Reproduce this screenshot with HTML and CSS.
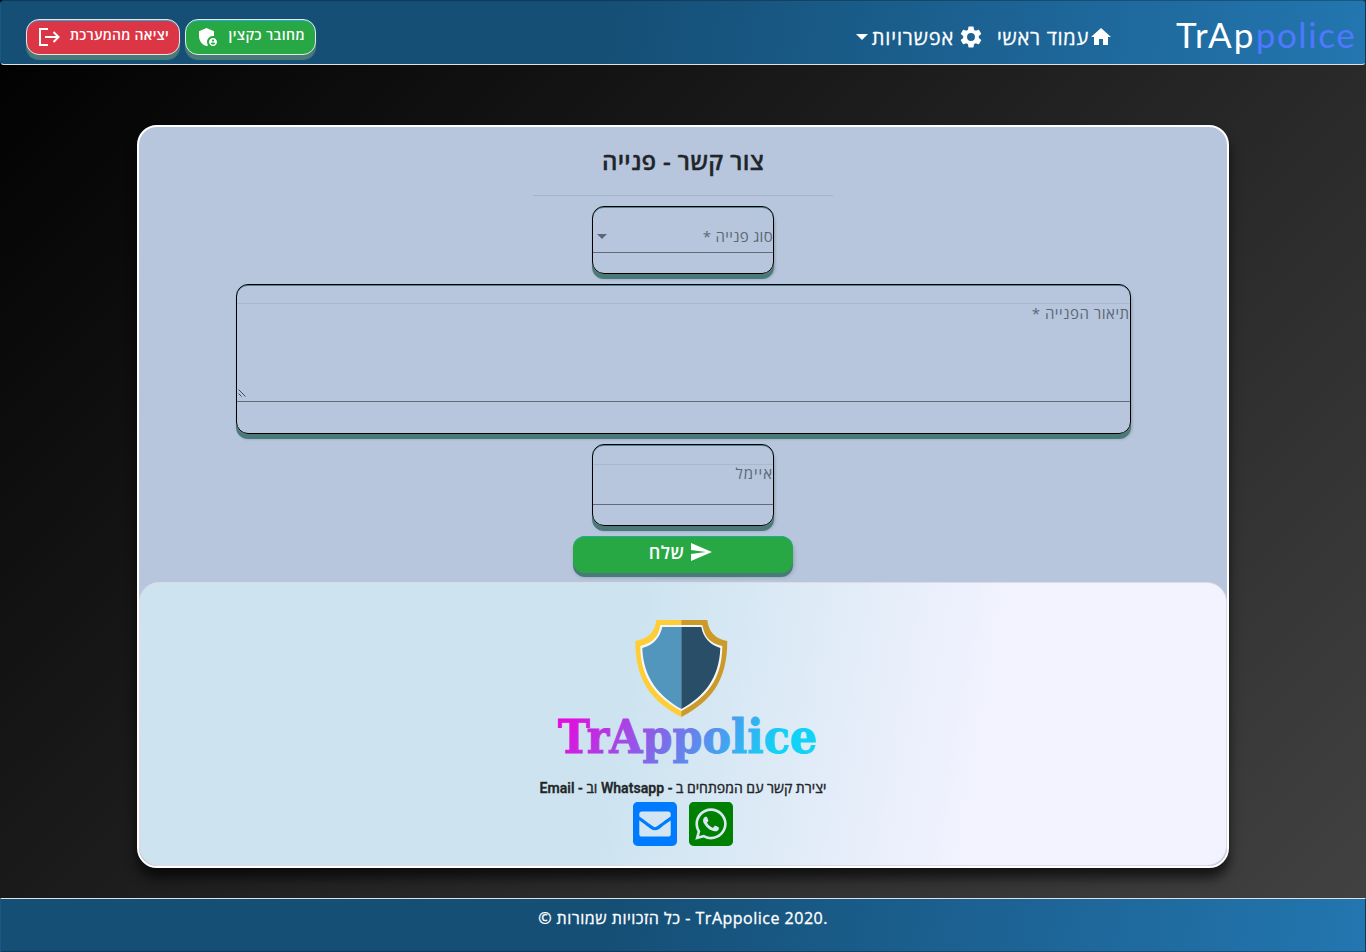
FILE: index.html
```html
<!DOCTYPE html>
<html lang="he" dir="rtl">
<head>
<meta charset="utf-8">
<title>TrAppolice</title>
<link rel="stylesheet" href="styles.css">
</head>
<body>
<header class="navbar">
  <a class="brand" dir="ltr">TrAp<span class="brand-accent">police</span></a>
  <nav class="menu">
    <a class="menu-item home"><svg class="icon" viewBox="0 0 24 24"><path d="M10 20V14H14V20H19V12H22L12 3 2 12H5V20H10Z"/></svg><span class="t-home">עמוד ראשי</span></a>
    <a class="menu-item options"><svg class="icon gear" viewBox="1 1 22 22"><path d="M19.14 12.94c.04-.3.06-.61.06-.94 0-.32-.02-.64-.07-.94l2.03-1.58c.18-.14.23-.41.12-.61l-1.92-3.32c-.12-.22-.37-.29-.59-.22l-2.39.96c-.5-.38-1.03-.7-1.62-.94l-.36-2.54c-.04-.24-.24-.41-.48-.41h-3.84c-.24 0-.43.17-.47.41l-.36 2.54c-.59.24-1.13.57-1.62.94l-2.39-.96c-.22-.08-.47 0-.59.22L2.74 8.87c-.12.21-.08.47.12.61l2.03 1.58c-.05.3-.09.63-.09.94s.02.64.07.94l-2.03 1.58c-.18.14-.23.41-.12.61l1.92 3.32c.12.22.37.29.59.22l2.39-.96c.5.38 1.03.7 1.62.94l.36 2.54c.05.24.24.41.48.41h3.84c.24 0 .44-.17.47-.41l.36-2.54c.59-.24 1.13-.56 1.62-.94l2.39.96c.22.08.47 0 .59-.22l1.92-3.32c.12-.22.07-.47-.12-.61l-2.01-1.58zM12 15.6A3.6 3.6 0 1 1 12 8.4a3.6 3.6 0 0 1 0 7.2z"/></svg><span class="t-options">אפשרויות</span><i class="caret"></i></a>
  </nav>
  <div class="session">
    <button class="pill officer"><span class="t-officer">מחובר כקצין</span><svg class="icon" viewBox="0 0 24 24"><path d="M17 11c.34 0 .67.04 1 .09V6.27L10.500 3 3 6.270v4.910c0 4.540 3.200 8.790 7.500 9.820.55-.13 1.080-.32 1.600-.55-.69-.98-1.100-2.170-1.100-3.450 0-3.310 2.690-6 6-6z"/><path d="M17 13c-2.210 0-4 1.790-4 4s1.790 4 4 4 4-1.790 4-4-1.790-4-4-4zm0 1.380c.62 0 1.120.51 1.120 1.120s-.51 1.120-1.120 1.120-1.120-.51-1.120-1.120.5-1.120 1.120-1.120zm0 5.370c-.93 0-1.740-.46-2.240-1.170.05-.72 1.510-1.080 2.240-1.080s2.190.36 2.240 1.080c-.5.71-1.310 1.170-2.240 1.170z"/></svg></button>
    <button class="pill logout"><span class="t-logout">יציאה מהמערכת</span><svg class="icon" viewBox="0 0 24 24"><path class="line" d="M11 4H3v16h8M8 12h13M16.500 7l5 5-5 5"/></svg></button>
  </div>
</header>

<main class="card">
  <form class="form">
    <h1 class="title"><span class="t-title">צור קשר - פנייה</span></h1>
    <hr class="rule">
    <div class="field select"><span class="label t-type">סוג פנייה *</span><i class="caret"></i></div>
    <div class="field area"><span class="label t-desc">תיאור הפנייה *</span>
      <svg class="grip" viewBox="0 0 9 9"><path d="M.5 1.500l7 7M.5 5.500l3 3"/></svg></div>
    <div class="field email"><span class="label t-email">איימל</span></div>
    <button class="send" type="button"><svg class="icon" viewBox="0 0 24 24"><path d="M2 21L23 12 2 3V10L17 12 2 14V21Z"/></svg><span class="t-send">שלח</span></button>
  </form>
  <section class="contact">
    <svg class="logo" viewBox="0 0 270 148">
      <defs>
        <linearGradient id="word" gradientUnits="userSpaceOnUse" x1="20" y1="60" x2="200" y2="165">
          <stop offset="0" stop-color="#f000dc"/><stop offset="1" stop-color="#12d2f5"/>
        </linearGradient>
      </defs>
      <g transform="translate(-.7 0)">
      <path fill="#ffcd36" d="M126 2H101Q99 20 80 23C80 65 98 84 126 99Z"/>
      <path fill="#cc9a29" d="M126 2H152Q154 20 172 23C172 65 154 84 126 99Z"/>
      <path fill="#f3f7fa" d="M126 7H105Q103 24 85 28C85 61 102 80 126 93 151 80 167 61 167 28 150 24 149 14 147 7Z"/>
      <path fill="#5296bd" d="M126 9H107Q103 26 87 30C88 61 105 79 126 91Z"/>
      <path fill="#294f68" d="M126 9H146Q149 25 165 30C164 61 148 79 126 91Z"/>
      </g>
      <text class="wordmark" direction="ltr" x="2" y="135" textLength="259" lengthAdjust="spacingAndGlyphs" fill="url(#word)" stroke="url(#word)">TrAppolice</text>
    </svg>
    <p class="caption"><span class="t-caption">יצירת קשר עם המפתחים ב - Whatsapp וב - Email</span></p>
    <div class="links">
      <svg class="link whatsapp" viewBox="0 32 448 448"><path d="M224 122.800c-72.700 0-131.800 59.100-131.900 131.800 0 24.900 7 49.200 20.200 70.100l3.100 5-13.300 48.600 49.900-13.100 4.800 2.900c20.200 12 43.400 18.400 67.100 18.400h.1c72.600 0 133.300-59.100 133.300-131.800 0-35.200-15.200-68.300-40.100-93.200-25-25-58-38.700-93.200-38.700zm77.500 188.400c-3.300 9.300-19.100 17.700-26.700 18.800-12.600 1.900-22.400.9-47.500-9.900-39.700-17.200-65.700-57.200-67.700-59.800-2-2.600-16.200-21.500-16.200-41s10.200-29.100 13.900-33.100c3.600-4 7.900-5 10.600-5 2.600 0 5.300 0 7.600.1 2.400.1 5.700-.9 8.900 6.800 3.300 7.900 11.200 27.400 12.200 29.400s1.700 4.300.3 6.900c-7.600 15.200-15.700 14.600-11.600 21.600 15.300 26.300 30.600 35.400 53.900 47.100 4 2 6.300 1.700 8.600-1 2.300-2.600 9.900-11.600 12.500-15.500 2.600-4 5.300-3.300 8.900-2 3.600 1.300 23.100 10.900 27.100 12.900s6.600 3 7.600 4.600c.9 1.900.9 9.900-2.400 19.100zM400 32H48C21.500 32 0 53.500 0 80v352c0 26.500 21.500 48 48 48h352c26.500 0 48-21.500 48-48V80c0-26.500-21.500-48-48-48zM223.900 413.200c-26.600 0-52.700-6.700-75.800-19.300L64 416l22.500-82.200c-13.900-24-21.200-51.300-21.200-79.300C65.400 167.100 136.500 96 223.900 96c42.400 0 82.200 16.500 112.200 46.500 29.900 30 47.900 69.800 47.900 112.200 0 87.400-72.700 158.500-160.100 158.500z"/></svg>
      <svg class="link mail" viewBox="0 32 448 448"><path d="M400 32H48C21.490 32 0 53.490 0 80v352c0 26.510 21.490 48 48 48h352c26.510 0 48-21.490 48-48V80c0-26.510-21.490-48-48-48zM178.117 262.104C87.429 196.287 88.353 196.121 64 177.167V152c0-13.255 10.745-24 24-24h272c13.255 0 24 10.745 24 24v25.167c-24.371 18.969-23.434 19.124-114.117 84.938-10.500 7.655-31.392 26.120-45.883 25.894-14.503.218-35.367-18.227-45.883-25.895zM384 217.775V360c0 13.255-10.745 24-24 24H88c-13.255 0-24-10.745-24-24V217.775c13.958 10.794 33.329 25.236 95.303 70.214 14.162 10.341 37.975 32.145 64.697 32.010 26.887.134 51.036-22.041 64.720-32.025 61.958-44.964 81.325-59.406 95.280-70.199z"/></svg>
    </div>
  </section>
</main>

<footer class="footer"><span class="t-footer" dir="ltr">© כל הזכויות שמורות - TrAppolice 2020.</span></footer>
</body>
</html>
```
FILE: styles.css
```css
* { box-sizing: border-box; }
html { height: 100%; }
body {
  margin: 0;
  height: 952px;
  overflow: hidden;
  display: flex;
  flex-direction: column;
  font-family: "Open Sans", "DejaVu Sans", sans-serif;
  background: linear-gradient(135deg, #000 0%, #434343 100%);
  color: #212529;
}
span { white-space: nowrap; }
.icon { width: 24px; height: 24px; fill: #fff; flex: none; }
.line { fill: none; stroke: #fff; stroke-width: 2; }
.caret { width: 0; height: 0; border: 5px solid transparent; border-top-color: currentColor; border-bottom: 0; flex: none; }

.navbar, .footer {
  background: linear-gradient(100deg, #154f76 0%, #154f76 45%, #2376b0 100%);
  border: 1px solid rgba(0, 0, 0, .25);
  color: #fff;
  flex: none;
}
.navbar {
  height: 65px;
  border-bottom-color: #dee2e6;
  border-radius: 4px;
  display: flex;
  align-items: flex-start;
  padding: 0 10px 0 25px;
}
.brand { font-family: Lato, sans-serif; font-size: 35px; line-height: 44px; padding-top: 11px; letter-spacing: 2.2px; width: 179px; white-space: nowrap; }
.brand-accent { color: #5078ff; letter-spacing: 1.6px; }
.menu { display: flex; margin-right: 63px; padding-top: 24px; gap: 14px; }
.menu-item { display: flex; align-items: center; height: 24px; font-size: 20px; line-height: 24px; font-weight: 500; -webkit-text-stroke: .3px #fff; }
.menu-item span { padding-top: 2px; }
.t-home { letter-spacing: .75px; }
.t-options { letter-spacing: .85px; }
.options .caret { margin-right: 4px; border-width: 6px 6px 0; }
.gear { margin-left: 5px; }
.session { margin-right: auto; display: flex; gap: 5px; padding-top: 18px; }
.pill {
  height: 36px;
  border: 1px solid #e3e7ea;
  border-radius: 13px;
  color: #fff;
  font: 600 14px "Open Sans", sans-serif;
  display: flex;
  align-items: center;
  padding: 0 10px;
  box-shadow: inset 0 1px 0 #25a9d8, 0 5px 1px #4a7a78;
}
.pill span { line-height: 20px; padding-bottom: 4px; }
.officer { background: #28a745; width: 131px; letter-spacing: .4px; }
.logout { background: #dc3545; width: 154px; letter-spacing: .22px; }
.pill .icon { margin-right: auto; }

.card {
  width: 1092px;
  height: 743px;
  flex: none;
  margin: 60px auto 30px;
  border: 2px solid #fff;
  border-radius: 20px;
  background: #b7c6dc;
  box-shadow: 0 10px 12px rgba(0, 0, 0, .65);
  display: flex;
  flex-direction: column;
}
.form { height: 455px; flex: none; display: flex; flex-direction: column; align-items: center; }
.title { margin: 0; height: 68px; padding-top: 17px; font-size: 24px; font-weight: 600; line-height: 34px; letter-spacing: .3px; -webkit-text-stroke: .3px #212529; }
.rule { width: 300px; height: 1px; margin: 0 0 10px; border: 0; background: #a5b3c7; flex: none; }
.field {
  border: 1px solid #000;
  border-radius: 12px;
  width: 182px;
  margin-bottom: 10px;
  color: #5d6676;
  font-size: 15px;
  line-height: 20px;
  position: relative;
  flex: none;
  box-shadow: inset 0 1px 0 #4a8795, 0 5px 0 #4a7a78, 1px 5px 3px rgba(0, 0, 0, .2);
}
.select { height: 68px; }
.select::after, .area::after, .email::after { content: ""; position: absolute; left: 0; right: 0; bottom: 20px; height: 1px; background: #636b79; }
.select { display: flex; align-items: center; justify-content: space-between; padding: 0 0 8px 4px; }
.area { width: 895px; height: 150px; padding-top: 18px; }
.area::after { bottom: 31px; }
.email { height: 82px; padding-top: 18px; }
.area::before, .email::before { content: ""; position: absolute; left: 0; right: 0; top: 18px; height: 1px; background: #aab9ca; }
.email::before { top: 19px; }
.label { display: block; }
.t-type { letter-spacing: .3px; }
.t-desc { letter-spacing: .5px; }
.t-email { letter-spacing: 1px; }
.grip { position: absolute; left: 1px; bottom: 36px; width: 9px; height: 9px; fill: none; stroke: #444b55; stroke-width: 1; }
.send {
  width: 220px;
  height: 37px;
  border: 0;
  border-radius: 12px;
  background: #28a745;
  box-shadow: inset 0 1px 0 #20ae91, 0 4px 0 #4a7a78, 1px 4px 4px rgba(0, 0, 0, .2);
  color: #fff;
  display: flex;
  justify-content: center;
  align-items: center;
  gap: 5px;
  padding: 0 4px 5px 0;
  font: 600 18px "Open Sans", sans-serif;
  letter-spacing: .5px;
  flex: none;
}
.contact {
  flex: 1;
  border: 1px solid #dadce0;
  border-radius: 20px;
  background: linear-gradient(100deg, #cde4f0 0%, #cde4f0 45%, #f3f3ff 78%, #f3f3ff 100%);
  display: flex;
  flex-direction: column;
  align-items: center;
  padding-top: 35px;
}
.logo { width: 270px; height: 148px; margin-left: 15px; flex: none; overflow: visible; }
.wordmark { font: bold 46px "DejaVu Serif", serif; stroke-width: 1px; }
.caption { margin: 12px 0 4px; height: 20px; font: 500 14px/20px Roboto, "Open Sans", sans-serif; letter-spacing: .05px; color: #212529; -webkit-text-stroke: .4px #212529; }
.links { display: flex; gap: 12px; }
.link { width: 44px; height: 44px; }
.whatsapp { fill: #008000; }
.mail { fill: #007bff; }
.footer { height: 54px; border-top-color: #dee2e6; text-align: center; font-size: 16px; font-weight: 500; letter-spacing: .5px; line-height: 20px; padding-top: 9px; -webkit-text-stroke: .3px #fff; }
.t-footer { display: inline-block; }
```
